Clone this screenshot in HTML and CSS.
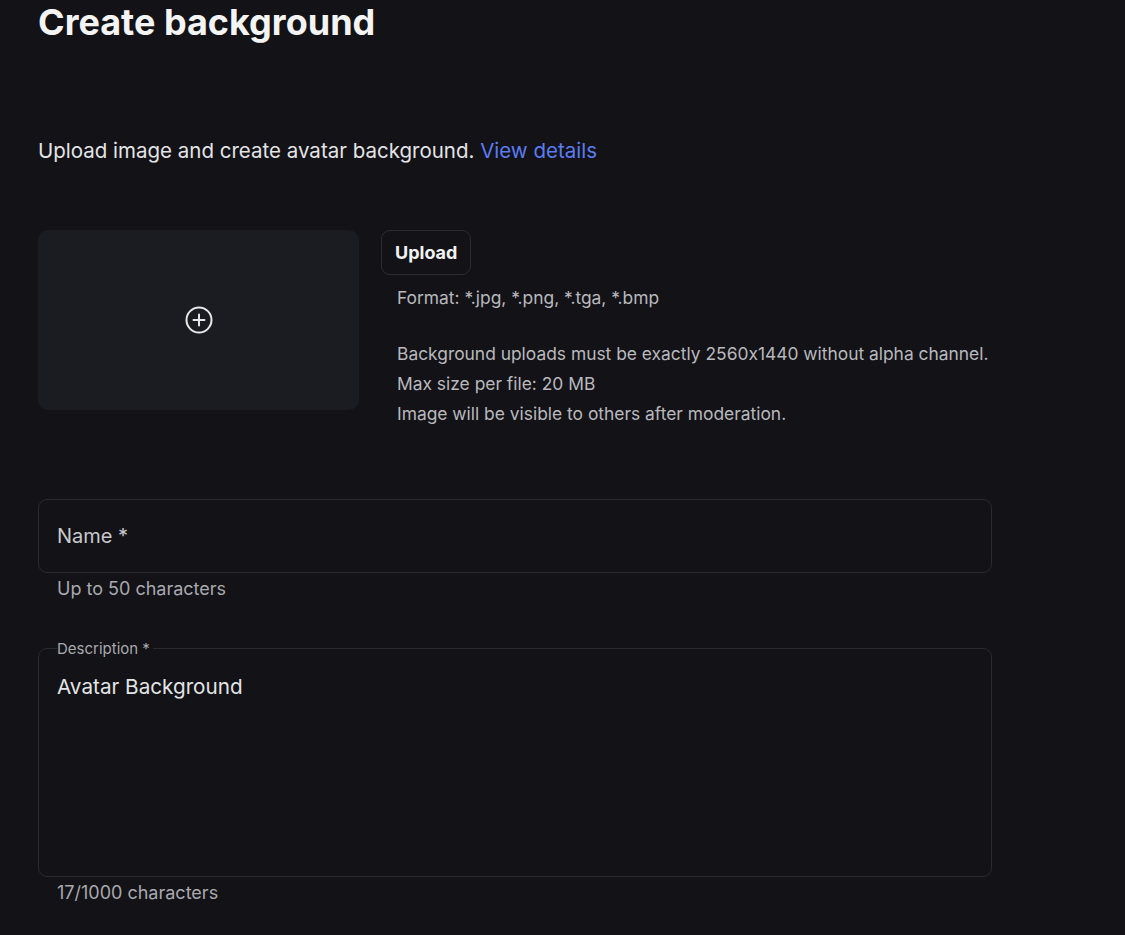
FILE: index.html
```html
<!DOCTYPE html>
<html lang="en">
<head>
  <meta charset="UTF-8">
  <title>Create background</title>
  <link rel="stylesheet" href="styles.css">
</head>
<body>
  <main class="page">
    <h1 class="title">Create background</h1>

    <p class="intro">Upload image and create avatar background. <a class="link" href="#">View details</a></p>

    <!-- Upload area: drop box + button and rules -->
    <section class="upload">
      <div class="drop">
        <svg class="drop-icon" width="30" height="30" viewBox="0 0 30 30" fill="none" stroke="#e8e8ea" stroke-width="2" stroke-linecap="round">
          <circle cx="15" cy="15" r="12.5"/>
          <path d="M15 9.5v11M9.5 15h11"/>
        </svg>
      </div>
      <div class="upload-info">
        <button class="upload-btn">Upload</button>
        <p class="format">Format: *.jpg, *.png, *.tga, *.bmp</p>
        <ul class="rules">
          <li>Background uploads must be exactly 2560x1440 without alpha channel.</li>
          <li>Max size per file: 20 MB</li>
          <li>Image will be visible to others after moderation.</li>
        </ul>
      </div>
    </section>

    <!-- Name field -->
    <div class="field">
      <div class="input">Name *</div>
      <div class="hint">Up to 50 characters</div>
    </div>

    <!-- Description field -->
    <div class="field">
      <fieldset class="textarea">
        <legend class="legend">Description *</legend>
        <div class="value">Avatar Background</div>
      </fieldset>
      <div class="hint">17/1000 characters</div>
    </div>
  </main>
</body>
</html>
```

FILE: styles.css
```css
/* Base */
body {
  margin: 0;
  background-color: #121217;
  color: #e6e6e8;
  font-family: 'Inter', 'Liberation Sans', sans-serif;
  font-feature-settings: "calt" 0;
}

.page {
  padding: 0 38px;
  width: 954px;
}

/* Heading */
.title {
  margin: 0;
  padding-top: 1px;
  font-size: 36px;
  font-weight: 700;
  line-height: 42px;
  color: #f4f4f5;
}

.intro {
  margin: 95px 0 0;
  font-size: 20.5px;
  line-height: 26px;
  color: #e4e4e6;
}

.link {
  color: #5c7cf2;
  text-decoration: none;
}

/* Upload section */
.upload {
  display: flex;
  gap: 22px;
  margin-top: 66px;
}

.drop {
  flex-shrink: 0;
  width: 321px;
  height: 180px;
  background-color: #1b1c21;
  border-radius: 10px;
  display: flex;
  align-items: center;
  justify-content: center;
}

.upload-info {
  display: flex;
  flex-direction: column;
  align-items: flex-start;
  white-space: nowrap;
}

.upload-btn {
  background: transparent;
  border: 1px solid #2b2c32;
  border-radius: 9px;
  color: #f2f2f3;
  font-family: inherit;
  font-size: 18px;
  font-weight: 700;
  height: 45px;
  padding: 0 13px;
}

.format,
.rules {
  margin: 0;
  padding: 0 0 0 16px;
  font-size: 17.4px;
  line-height: 30px;
  color: #b9b9bd;
  list-style: none;
}

.format {
  margin-top: 8px;
}

.rules {
  margin-top: 26px;
}

/* Form fields */
.field {
  margin-top: 70px;
}

.field + .field {
  margin-top: 39px;
}

.input {
  height: 72px;
  border: 1px solid #2a2b31;
  border-radius: 9px;
  padding: 0 18px;
  display: flex;
  align-items: center;
  font-size: 20px;
  color: #c9c9cd;
}

.hint {
  padding: 5px 0 0 19px;
  font-size: 18px;
  line-height: 22px;
  color: #a9a9ae;
}

.textarea {
  margin: 0;
  border: 1px solid #2a2b31;
  border-radius: 9px;
  padding: 0 18px;
  box-sizing: border-box;
  height: 238px;
}

.legend {
  padding: 0 3px 0 0;
  font-size: 15px;
  color: #a9a9ae;
}

.value {
  margin-top: 16px;
  font-size: 20.7px;
  color: #e4e4e6;
}
```
